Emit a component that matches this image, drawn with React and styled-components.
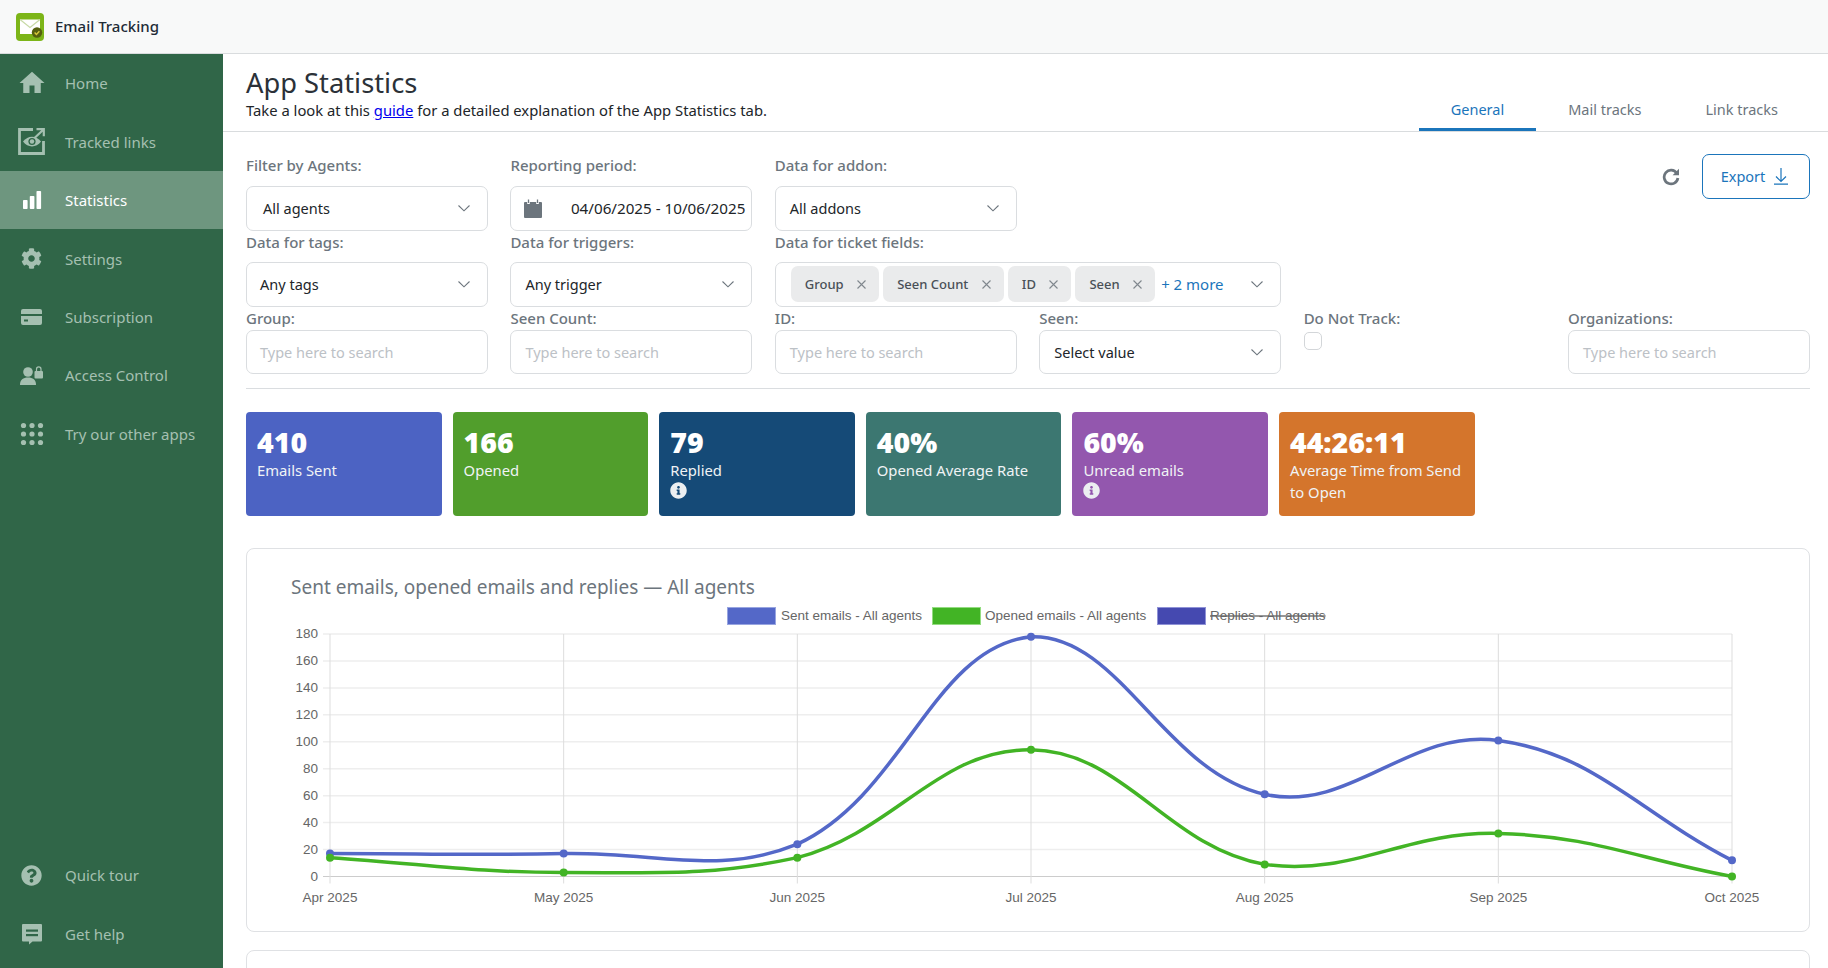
import React from "react";
import styled, { createGlobalStyle } from "styled-components";
import { FaCog, FaQuestionCircle, FaInfoCircle } from "react-icons/fa";
import { MdHome } from "react-icons/md";

const GlobalStyle = createGlobalStyle`
  html, body {
    margin: 0;
    padding: 0;
    height: 100%;
    overflow: hidden;
    background: #fff;
    font-family: "Noto Sans", "Open Sans", sans-serif;
  }
  * { box-sizing: border-box; }
`;

const Page = styled.div`
  height: 100vh;
  display: flex;
  flex-direction: column;
  overflow: hidden;
`;

const TopBar = styled.header`
  height: 54px;
  flex: none;
  display: flex;
  align-items: center;
  gap: 11px;
  padding: 0 16px;
  background: #f8f9f9;
  border-bottom: 1px solid #d9dcde;
`;

const Brand = styled.span`
  margin-bottom: 2px;
  font-size: 15px;
  font-weight: 500;
  color: #212b36;
`;

const Body = styled.div`
  flex: 1;
  display: flex;
  min-height: 0;
`;

const Sidebar = styled.nav`
  width: 223px;
  flex: none;
  display: flex;
  flex-direction: column;
  justify-content: space-between;
  padding-bottom: 5px;
  background: #306648;
`;

const NavItem = styled.div`
  height: 58.45px;
  display: flex;
  align-items: center;
  padding-left: 19px;
  font-size: 15px;
  color: ${(p) => (p.$active ? "#fff" : "#a5c0b1")};
  background: ${(p) => (p.$active ? "#6e967f" : "transparent")};
`;

const NavIcon = styled.span`
  width: 25px;
  height: 25px;
  margin-right: 21px;
  display: flex;
  align-items: center;
  justify-content: center;
  font-size: ${(p) => p.$size || 21}px;

  svg {
    flex: none;
  }
`;

const Main = styled.main`
  flex: 1;
  min-width: 0;
  overflow: hidden;
`;

const PageHead = styled.div`
  height: 78px;
  display: flex;
  justify-content: space-between;
  align-items: flex-end;
  padding-left: 23px;
  padding-right: 18px;
  border-bottom: 1px solid #d9dcde;
`;

const Title = styled.h1`
  margin: 0;
  font-size: 27.3px;
  line-height: 34px;
  font-weight: 400;
  color: #2b3138;
`;

const Subtitle = styled.p`
  margin: 0 0 11px;
  font-size: 14.8px;
  line-height: 20px;
  color: #212529;

  a {
    color: #0000ee;
    text-decoration: underline;
  }
`;

const Tabs = styled.div`
  display: flex;
`;

const Tab = styled.div`
  height: 46px;
  padding: 4px 32px 0;
  display: flex;
  align-items: center;
  font-size: 14.5px;
  color: ${(p) => (p.$active ? "#1b75bb" : "#6c757d")};
  border-bottom: 3px solid ${(p) => (p.$active ? "#1b75bb" : "transparent")};
`;

const Content = styled.div`
  padding: 22px 18px 0 23px;
`;

const FilterGrid = styled.div`
  display: grid;
  grid-template-columns: repeat(6, 1fr);
  column-gap: 22.5px;
  grid-template-rows: 77px 76px 67px;
`;

const Field = styled.div`
  grid-column: span ${(p) => p.$span || 1};
  display: flex;
  flex-direction: column;
  gap: ${(p) => p.$gap}px;
`;

const Label = styled.label`
  font-size: 15px;
  line-height: 22px;
  font-weight: 500;
  color: #6c757d;
`;

const Control = styled.div`
  height: 44.5px;
  display: flex;
  align-items: center;
  justify-content: space-between;
  padding: 0 ${(p) => p.$right || 16}px 0 ${(p) => p.$left || 14}px;
  font-size: 14.5px;
  color: #212529;
  background: #fff;
  border: 1px solid #dadde0;
  border-radius: 7px;
  white-space: nowrap;
`;

const Placeholder = styled.span`
  color: #bcc1c6;
`;

const DateText = styled.span`
  font-size: 15.2px;
`;

const Chips = styled.div`
  display: flex;
  align-items: center;
  gap: 4px;
  padding-left: 14px;
`;

const Chip = styled.span`
  height: 36px;
  display: flex;
  align-items: center;
  gap: 13.5px;
  padding: 0 13px 0 14px;
  font-size: 13px;
  font-weight: 500;
  color: #495057;
  background: #eaebec;
  border-radius: 7px;
`;

const MoreLink = styled.span`
  margin-left: 2px;
  font-size: 15px;
  color: #1b75bb;
`;

const Checkbox = styled.span`
  width: 18px;
  height: 18px;
  border: 1px solid #d3d6d9;
  border-radius: 5px;
`;

const Actions = styled.div`
  grid-column: 5 / span 2;
  display: flex;
  justify-content: flex-end;
  align-items: flex-start;
  gap: 22px;
`;

const RefreshButton = styled.span`
  height: 45px;
  display: flex;
  align-items: center;
  color: #6c757d;
`;

const ExportButton = styled.button`
  width: 108px;
  height: 45px;
  display: flex;
  align-items: center;
  justify-content: center;
  gap: 8px;
  padding: 0 2px 2px 0;
  font-family: inherit;
  font-size: 14.5px;
  color: #1b75bb;
  background: #fff;
  border: 1px solid #1b75bb;
  border-radius: 7px;
`;

const Rule = styled.hr`
  margin: 14px 0 23px;
  border: 0;
  border-top: 1px solid #dadde0;
`;

const StatRow = styled.div`
  display: flex;
  gap: 11px;
`;

const StatCard = styled.div`
  width: 195.6px;
  height: 103.5px;
  padding: 13px 11px 0;
  color: #fff;
  background: ${(p) => p.$bg};
  border-radius: 4px;
  overflow: hidden;
`;

const StatValue = styled.div`
  font-size: 28.5px;
  line-height: 34px;
  font-weight: 900;
`;

const StatLabel = styled.div`
  font-size: 14.8px;
  line-height: 22px;
  color: #f0f3f5;
`;

const StatInfo = styled.div`
  height: 18px;
  display: flex;
  align-items: center;
  font-size: 17px;
  color: #eceff1;
`;

const Panel = styled.section`
  margin-top: 32px;
  height: 384px;
  padding-top: 25px;
  background: #fff;
  border: 1px solid #dfe1e4;
  border-radius: 8px;
`;

const PanelTitle = styled.h2`
  margin: 0 0 1px 44px;
  font-size: 19px;
  line-height: 26px;
  font-weight: 400;
  color: #6c757d;
`;

const NextPanel = styled.section`
  margin-top: 18px;
  height: 200px;
  border: 1px solid #dfe1e4;
  border-radius: 8px;
`;

const ChartSvg = styled.svg`
  display: block;
  width: 1560px;
  height: 328px;

  text {
    font-family: "Liberation Sans", Arial, sans-serif;
    font-size: 13.5px;
    fill: #666;
  }
`;

const Chevron = () => (
  <svg width="14" height="14" viewBox="0 0 14 14" fill="none" stroke="#6c757d" strokeWidth="1.1">
    <path d="M1.5 4.5 7 9.8l5.5-5.3" />
  </svg>
);

const CloseIcon = () => (
  <svg width="9" height="9" viewBox="0 0 9 9" fill="none" stroke="#80878e" strokeWidth="1.1">
    <path d="M.5.5l8 8M8.5.5l-8 8" />
  </svg>
);

const Logo = () => (
  <svg width="28" height="28" viewBox="0 0 28 28">
    <rect width="28" height="28" rx="4" fill="#7cb518" />
    <rect x="4" y="6.5" width="20" height="14.5" fill="#fff" />
    <path d="M4 6.5l10 8 10-8" fill="none" stroke="#c7d9a5" strokeWidth="1.2" />
    <circle cx="21" cy="19.5" r="5.2" fill="#55600f" />
    <path d="M18.6 19.5l1.8 1.9 3-3.2" fill="none" stroke="#d7c93a" strokeWidth="1.4" />
  </svg>
);

const TrackedIcon = () => (
  <svg width="27" height="27" viewBox="0 0 27 27" fill="none" stroke="currentColor">
    <path d="M15 1.500H1.500v24h24V13" strokeWidth="2.800" />
    <path d="M16 10.500l9-8.500M18.500 1.200h7.300v7" strokeWidth="2.200" />
    <path d="M5 13.500c5-6.500 13-6.500 18 0-5 6.500-13 6.500-18 0z" fill="currentColor" stroke="none" />
    <circle cx="14" cy="13.500" r="3.600" fill="#306648" stroke="none" />
    <circle cx="14" cy="13.500" r="2.200" fill="currentColor" stroke="none" />
  </svg>
);

const BarsIcon = () => (
  <svg width="20" height="20" viewBox="0 0 20 20" fill="currentColor">
    <rect x="1" y="10" width="4.600" height="9" rx="0.800" />
    <rect x="7.800" y="6" width="4.600" height="13" rx="0.800" />
    <rect x="14.500" y="1" width="4.600" height="18" rx="0.800" />
  </svg>
);

const CardIcon = () => (
  <svg width="21" height="16" viewBox="0 0 21 16" fill="currentColor">
    <path d="M2 0h17a2 2 0 0 1 2 2v3H0V2a2 2 0 0 1 2-2zM0 7h21v7a2 2 0 0 1-2 2H2a2 2 0 0 1-2-2z" />
    <rect x="3" y="10.500" width="4" height="2" fill="#306648" />
  </svg>
);

const AccessIcon = () => (
  <svg width="23" height="19" viewBox="0 0 23 19" fill="currentColor" stroke="none">
    <circle cx="8" cy="6" r="4.800" />
    <path d="M0 19c0-5.500 3.200-7.500 8-7.500s8 2 8 7.500z" />
    <rect x="14.500" y="5" width="8.500" height="7.500" rx="1" />
    <path d="M16.500 5V3.200a2.200 2.200 0 0 1 4.500 0V5" fill="none" stroke="currentColor" strokeWidth="1.200" />
  </svg>
);

const DotsIcon = () => (
  <svg width="24" height="24" viewBox="0 0 24 24" fill="currentColor">
    {[3.5, 12, 20.5].flatMap((y) =>
      [3.5, 12, 20.5].map((x) => <circle key={`${x}-${y}`} cx={x} cy={y} r="2.600" />)
    )}
  </svg>
);

const HelpIcon = () => (
  <svg width="22" height="22" viewBox="0 0 22 22" fill="currentColor">
    <path d="M2 1h18a1 1 0 0 1 1 1v15.500a1 1 0 0 1-1 1H11.500L8 21.500v-3H2a1 1 0 0 1-1-1V2a1 1 0 0 1 1-1z" />
    <rect x="5" y="6.500" width="12" height="2.200" fill="#306648" />
    <rect x="5" y="11" width="12" height="2.200" fill="#306648" />
  </svg>
);

const CalendarIcon = () => (
  <svg width="18" height="19" viewBox="0 0 18 19">
    <path d="M1 3h16a1 1 0 0 1 1 1v14a1 1 0 0 1-1 1H1a1 1 0 0 1-1-1V4a1 1 0 0 1 1-1z" fill="#6c757d" />
    <path d="M4.500 1v4M13.500 1v4" stroke="#fff" strokeWidth="2.600" />
    <path d="M4.500 0.500v3.500M13.500 0.500v3.500" stroke="#6c757d" strokeWidth="1.300" />
  </svg>
);

const RefreshIcon = () => (
  <svg width="18" height="18" viewBox="0 0 18 18" fill="none" stroke="currentColor" strokeWidth="2.700">
    <path d="M14.800 5.200A6.900 6.900 0 1 0 15.900 10" />
    <path d="M17 .8v6.400h-6.400z" fill="currentColor" stroke="none" />
  </svg>
);

const DownloadIcon = () => (
  <svg width="16" height="18" viewBox="0 0 16 18" fill="none" stroke="currentColor" strokeWidth="1.200">
    <path d="M8 1v13M3 9.500 8 14.500l5-5M1 17.200h14" />
  </svg>
);

const navTop = [
  { label: "Home", icon: <MdHome />, size: 30 },
  { label: "Tracked links", icon: <TrackedIcon /> },
  { label: "Statistics", icon: <BarsIcon />, active: true },
  { label: "Settings", icon: <FaCog /> },
  { label: "Subscription", icon: <CardIcon /> },
  { label: "Access Control", icon: <AccessIcon /> },
  { label: "Try our other apps", icon: <DotsIcon /> },
];

const navBottom = [
  { label: "Quick tour", icon: <FaQuestionCircle /> },
  { label: "Get help", icon: <HelpIcon /> },
];

const stats = [
  { value: "410", label: "Emails Sent", bg: "#4c63c3" },
  { value: "166", label: "Opened", bg: "#519e2c" },
  { value: "79", label: "Replied", bg: "#154a77", info: true },
  { value: "40%", label: "Opened Average Rate", bg: "#3c7771" },
  { value: "60%", label: "Unread emails", bg: "#9357ae", info: true },
  { value: "44:26:11", label: "Average Time from Send to Open", bg: "#d4752c" },
];

const chips = ["Group", "Seen Count", "ID", "Seen"];

const months = ["Apr 2025", "May 2025", "Jun 2025", "Jul 2025", "Aug 2025", "Sep 2025", "Oct 2025"];
const sent = [17, 17, 24, 178, 61, 101, 12];
const opened = [14, 3, 14, 94, 9, 32, 0];

const LEFT = 330;
const RIGHT = 1732;
const TOP = 633;
const BOTTOM = 875.5;

const xAt = (i) => LEFT + (i * (RIGHT - LEFT)) / 6;
const yAt = (v) => BOTTOM - (v * (BOTTOM - TOP)) / 180;

// same control points as a chart.js line with tension 0.4
const curvePath = (values) => {
  const pts = values.map((v, i) => [xAt(i), yAt(v)]);
  const controls = pts.map((cur, i) => {
    const prev = pts[i - 1] || cur;
    const next = pts[i + 1] || cur;
    const d01 = Math.hypot(cur[0] - prev[0], cur[1] - prev[1]);
    const d12 = Math.hypot(next[0] - cur[0], next[1] - cur[1]);
    const total = d01 + d12 || 1;
    const fa = (0.4 * d01) / total;
    const fb = (0.4 * d12) / total;
    const clampY = (y) => Math.min(BOTTOM, Math.max(TOP, y));
    return {
      before: [cur[0] - fa * (next[0] - prev[0]), clampY(cur[1] - fa * (next[1] - prev[1]))],
      after: [cur[0] + fb * (next[0] - prev[0]), clampY(cur[1] + fb * (next[1] - prev[1]))],
    };
  });
  let d = `M${pts[0][0]} ${pts[0][1]}`;
  for (let i = 1; i < pts.length; i++) {
    const a = controls[i - 1].after;
    const b = controls[i].before;
    d += `C${a[0]} ${a[1]} ${b[0]} ${b[1]} ${pts[i][0]} ${pts[i][1]}`;
  }
  return d;
};

const Series = ({ values, color }) => (
  <g>
    <path d={curvePath(values)} fill="none" stroke={color} strokeWidth="3.500" />
    {values.map((v, i) => (
      <circle key={i} cx={xAt(i)} cy={yAt(v)} r="4" fill={color} />
    ))}
  </g>
);

const legend = [
  { x: 727, fill: "#5468c8", edge: "#98a5e0", text: "Sent emails - All agents", tx: 781 },
  { x: 932, fill: "#42b425", edge: "#93dc80", text: "Opened emails - All agents", tx: 985 },
  { x: 1157, fill: "#4549b0", edge: "#8f92d6", text: "Replies - All agents", tx: 1210, off: true },
];

const Chart = () => (
  <ChartSvg viewBox="247 600 1560 328">
    {legend.map((item) => (
      <g key={item.text}>
        <rect x={item.x + 0.5} y="606.500" width="48" height="17" fill={item.fill} stroke={item.edge} />
        <text x={item.tx} y="619" textDecoration={item.off ? "line-through" : undefined}>
          {item.text}
        </text>
      </g>
    ))}
    {Array.from({ length: 10 }, (_, i) => {
      const y = yAt(i * 20);
      return (
        <g key={i}>
          <line
            x1={LEFT - 7}
            x2={RIGHT}
            y1={y}
            y2={y}
            stroke={i === 0 ? "#cccccc" : "#eeeeee"}
            strokeWidth={i === 0 ? 1 : 1.5}
          />
          <text x={318} y={y + 4} textAnchor="end">
            {i * 20}
          </text>
        </g>
      );
    })}
    {months.map((m, i) => (
      <g key={m}>
        <line x1={xAt(i)} x2={xAt(i)} y1={TOP} y2={BOTTOM + 7} stroke="#dddddd" />
        <text x={xAt(i)} y={901} textAnchor="middle">
          {m}
        </text>
      </g>
    ))}
    <Series values={sent} color="#5468c8" />
    <Series values={opened} color="#42b425" />
  </ChartSvg>
);

const App = () => {
  return (
    <Page>
      <GlobalStyle />
      <TopBar>
        <Logo />
        <Brand>Email Tracking</Brand>
      </TopBar>
      <Body>
        <Sidebar>
          <div>
            {navTop.map((item) => (
              <NavItem key={item.label} $active={item.active}>
                <NavIcon $size={item.size}>{item.icon}</NavIcon>
                {item.label}
              </NavItem>
            ))}
          </div>
          <div>
            {navBottom.map((item) => (
              <NavItem key={item.label}>
                <NavIcon>{item.icon}</NavIcon>
                {item.label}
              </NavItem>
            ))}
          </div>
        </Sidebar>
        <Main>
          <PageHead>
            <div>
              <Title>App Statistics</Title>
              <Subtitle>
                Take a look at this <a href="#guide">guide</a> for a detailed explanation of the App Statistics tab.
              </Subtitle>
            </div>
            <Tabs>
              <Tab $active>General</Tab>
              <Tab>Mail tracks</Tab>
              <Tab>Link tracks</Tab>
            </Tabs>
          </PageHead>
          <Content>
            <FilterGrid>
              <Field $gap={10}>
                <Label>Filter by Agents:</Label>
                <Control $left={16}>
                  All agents
                  <Chevron />
                </Control>
              </Field>
              <Field $gap={10}>
                <Label>Reporting period:</Label>
                <Control $left={13} $right={6}>
                  <CalendarIcon />
                  <DateText>04/06/2025 - 10/06/2025</DateText>
                </Control>
              </Field>
              <Field $gap={10}>
                <Label>Data for addon:</Label>
                <Control>
                  All addons
                  <Chevron />
                </Control>
              </Field>
              <Actions>
                <RefreshButton>
                  <RefreshIcon />
                </RefreshButton>
                <ExportButton>
                  Export
                  <DownloadIcon />
                </ExportButton>
              </Actions>

              <Field $gap={9}>
                <Label>Data for tags:</Label>
                <Control $left={13}>
                  Any tags
                  <Chevron />
                </Control>
              </Field>
              <Field $gap={9}>
                <Label>Data for triggers:</Label>
                <Control>
                  Any trigger
                  <Chevron />
                </Control>
              </Field>
              <Field $gap={9} $span={2}>
                <Label>Data for ticket fields:</Label>
                <Control $left={1}>
                  <Chips>
                    {chips.map((c) => (
                      <Chip key={c}>
                        {c}
                        <CloseIcon />
                      </Chip>
                    ))}
                    <MoreLink>+ 2 more</MoreLink>
                  </Chips>
                  <Chevron />
                </Control>
              </Field>
              <div />
              <div />

              <Field $gap={1}>
                <Label>Group:</Label>
                <Control $left={13}>
                  <Placeholder>Type here to search</Placeholder>
                </Control>
              </Field>
              <Field $gap={1}>
                <Label>Seen Count:</Label>
                <Control>
                  <Placeholder>Type here to search</Placeholder>
                </Control>
              </Field>
              <Field $gap={1}>
                <Label>ID:</Label>
                <Control>
                  <Placeholder>Type here to search</Placeholder>
                </Control>
              </Field>
              <Field $gap={1}>
                <Label>Seen:</Label>
                <Control>
                  Select value
                  <Chevron />
                </Control>
              </Field>
              <Field $gap={3}>
                <Label>Do Not Track:</Label>
                <Checkbox />
              </Field>
              <Field $gap={1}>
                <Label>Organizations:</Label>
                <Control>
                  <Placeholder>Type here to search</Placeholder>
                </Control>
              </Field>
            </FilterGrid>
            <Rule />
            <StatRow>
              {stats.map((s) => (
                <StatCard key={s.label} $bg={s.bg}>
                  <StatValue>{s.value}</StatValue>
                  <StatLabel>{s.label}</StatLabel>
                  {s.info && (
                    <StatInfo>
                      <FaInfoCircle />
                    </StatInfo>
                  )}
                </StatCard>
              ))}
            </StatRow>
            <Panel>
              <PanelTitle>Sent emails, opened emails and replies — All agents</PanelTitle>
              <Chart />
            </Panel>
            <NextPanel />
          </Content>
        </Main>
      </Body>
    </Page>
  );
};

export default App;
